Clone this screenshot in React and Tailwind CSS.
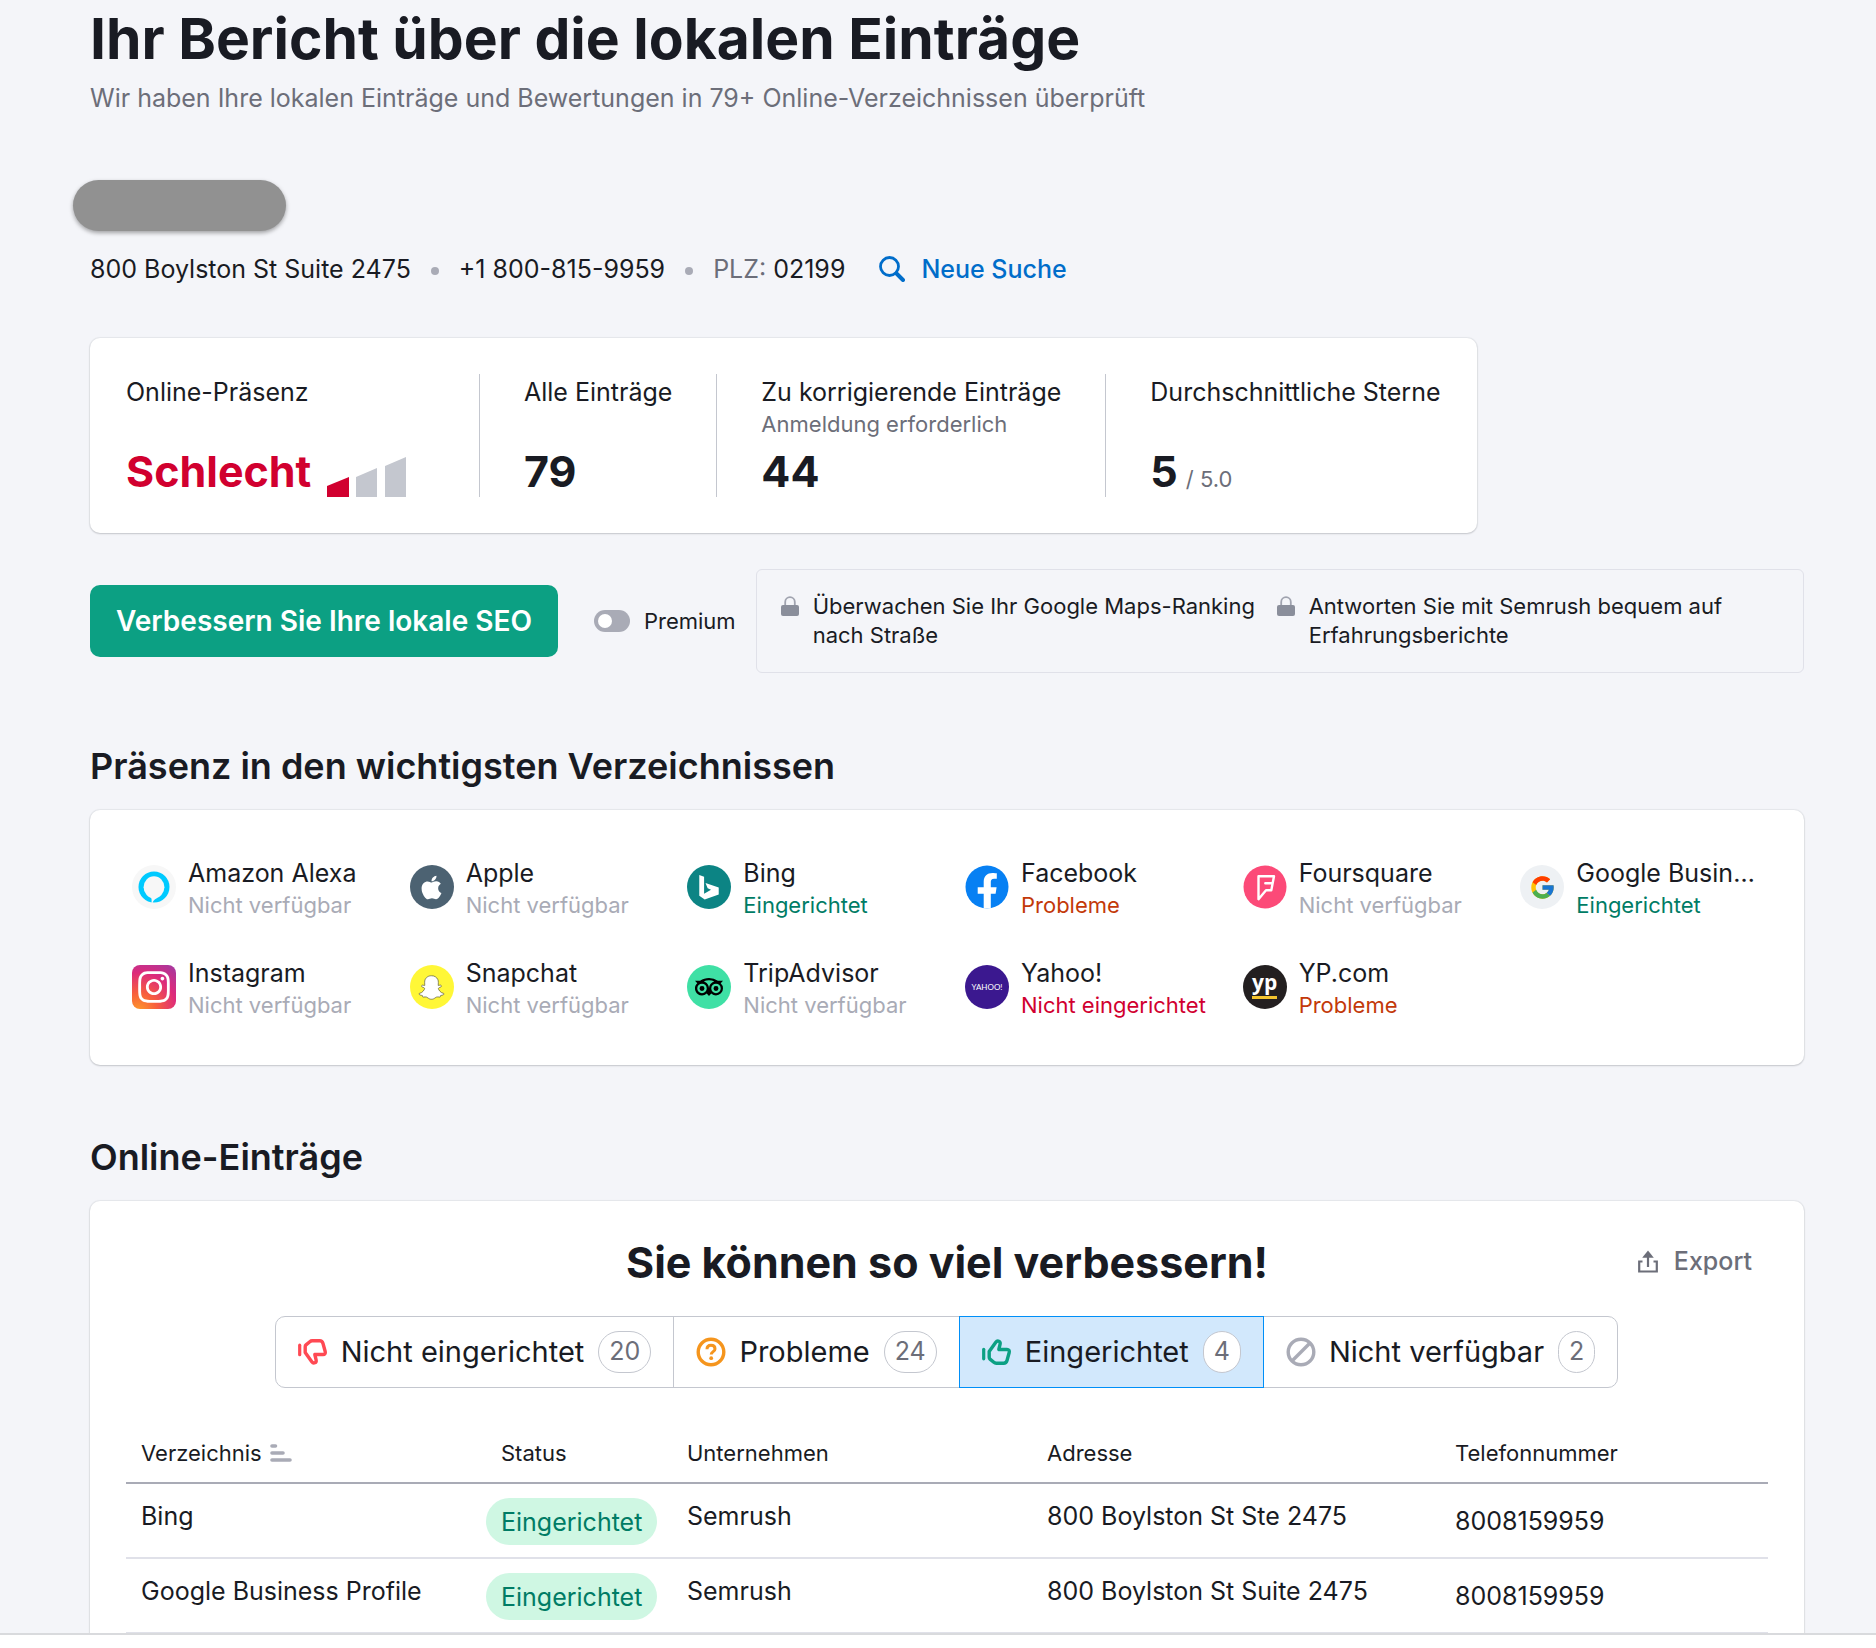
import React from "react";
import { FaApple, FaInstagram, FaSnapchatGhost } from "react-icons/fa";
import { FcGoogle } from "react-icons/fc";
import { SiTripadvisor } from "react-icons/si";

const disc = "size-11 shrink-0 rounded-full flex items-center justify-center overflow-hidden";

function AlexaLogo() {
  return (
    <svg viewBox="0 0 44 44" className="size-11 shrink-0" aria-hidden="true">
      <circle cx="22" cy="22" r="22" fill="#f7f7f7" />
      <circle cx="22" cy="22" r="15.5" fill="#00caff" />
      <ellipse cx="22" cy="22.3" rx="10.4" ry="11" fill="#f7f7f7" />
      <path d="M16.500 31c2 .9 3 2 3.100 3.500v3.300l1 .2c.3-1.800 1.500-3.200 4.200-4.700l3-3.500z" fill="#f7f7f7" />
    </svg>
  );
}

function AppleLogo() {
  return (
    <span className={`${disc} bg-[#4c6272]`}>
      <FaApple className="size-[27px] text-white" aria-hidden="true" />
    </span>
  );
}

function BingLogo() {
  return (
    <svg viewBox="0 0 43 43" className="size-11 shrink-0" aria-hidden="true">
      <circle cx="21.500" cy="21.500" r="21.500" fill="#0c8484" />
      <path d="M12 9.800l4.700 1.700v16.500l6.800-3.900-3.300-1.500-2.100-5.100 12.900 4.600v6.700L17.300 33.800 12 30z" fill="#fff" />
    </svg>
  );
}

function FacebookLogo() {
  return (
    <svg viewBox="0 0 43 44" className="size-11 shrink-0" aria-hidden="true">
      <circle cx="21.500" cy="22" r="21.500" fill="#0780f3" />
      <path
        d="M18.200 43.600V28.800h-6v-6.600h6v-5.400c0-6 3.600-8.900 8.800-8.900 1.800 0 3.600.3 4.300.4v5.500h-2.700c-2.600 0-3.300 1.400-3.300 3.200v5.200h5.800l-1 6.600h-4.800v14.800z"
        fill="#fff"
      />
    </svg>
  );
}

function FoursquareLogo() {
  return (
    <svg viewBox="0 0 43 44" className="size-11 shrink-0" aria-hidden="true">
      <circle cx="21.500" cy="22" r="21.500" fill="#fc4a78" />
      <path
        d="M15 11.200h15.500l-2.700 14H22.500l-7.500 9zM21.800 18.200h7"
        fill="none"
        stroke="#fff"
        strokeWidth="2.400"
        strokeLinejoin="round"
        strokeLinecap="round"
      />
    </svg>
  );
}

function GoogleLogo() {
  return (
    <span className={`${disc} bg-[#eef1f4]`}>
      <FcGoogle className="size-[27px]" aria-hidden="true" />
    </span>
  );
}

function InstagramLogo() {
  return (
    <span className="size-11 shrink-0 flex items-center justify-center rounded-lg bg-[radial-gradient(circle_at_15%_105%,#fd9a2b_0%,#f8603c_30%,#dd2a7b_65%,#8d3fb0_110%)]">
      <FaInstagram className="size-[36px] text-white" aria-hidden="true" />
    </span>
  );
}

function SnapchatLogo() {
  return (
    <span className={`${disc} bg-[#fff737]`}>
      <FaSnapchatGhost className="size-[25px] overflow-visible text-white" stroke="#55553a" strokeWidth="14" aria-hidden="true" />
    </span>
  );
}

function TripadvisorLogo() {
  return (
    <span className={`${disc} bg-[#3fe0a5]`}>
      <SiTripadvisor className="size-7 text-black" aria-hidden="true" />
    </span>
  );
}

function YahooLogo() {
  return (
    <span className={`${disc} bg-[#3b188f] font-['Lato',sans-serif] text-[8px] text-white`} aria-hidden="true">
      YAHOO!
    </span>
  );
}

function YpLogo() {
  return (
    <span className={`${disc} bg-[#231f20]`} aria-hidden="true">
      <span className="mb-1 border-b-[3px] border-[#f3c32e] pb-1 font-['Open_Sans',sans-serif] text-[21px] leading-5 font-bold text-white">
        yp
      </span>
    </span>
  );
}

function SearchIcon() {
  return (
    <svg viewBox="0 0 26 26" className="size-[26px]" fill="none" stroke="currentColor" aria-hidden="true">
      <circle cx="10.500" cy="10.500" r="9" strokeWidth="2.800" />
      <path d="M17.500 17.500l6.500 6.500" strokeWidth="4" strokeLinecap="round" />
    </svg>
  );
}

function LockIcon() {
  return (
    <svg viewBox="0 0 18 20" className="mt-1 h-5 w-[18px] shrink-0" aria-hidden="true">
      <rect x="0" y="9" width="18" height="11" rx="2" fill="#8a8e9b" />
      <path d="M4.200 9V6a4.800 4.800 0 0 1 9.600 0v3" fill="none" stroke="#a0a3af" strokeWidth="1.800" />
    </svg>
  );
}

function ExportIcon() {
  return (
    <svg viewBox="0 0 20 23" className="h-[23px] w-5" fill="none" stroke="currentColor" strokeWidth="2.200" aria-hidden="true">
      <path d="M4.500 11.500H1.200v10h17.600v-10h-3.300M10 17V6" />
      <path d="M10 .5l5.800 7.200H4.200z" fill="currentColor" stroke="none" />
    </svg>
  );
}

function ThumbIcon({ down }) {
  return (
    <svg viewBox="0 0 30 30" className="size-[30px] shrink-0" fill="none" stroke="currentColor" aria-hidden="true">
      <g transform={down ? "matrix(1 0 0 -1 0 30)" : undefined}>
        <path d="M1.700 12.300v9.500" strokeWidth="3.200" strokeLinecap="round" />
        <path
          d="M7.200 14.500l6.600-9.300c1.700-2.300 5-1 4.300 2l-1.300 5.300h8.200c1.800 0 2.700 1.200 2.200 3l-2.200 8c-.5 1.700-1.600 2.700-3.300 2.700h-7.500c-1 0-1.700-.3-2.400-.9L8 22.100c-.6-.5-.8-1-.8-1.800z"
          strokeWidth="3.400"
          strokeLinejoin="round"
        />
      </g>
    </svg>
  );
}

function QuestionIcon() {
  return (
    <svg viewBox="0 0 30 30" className="size-[30px] shrink-0" fill="none" stroke="currentColor" aria-hidden="true">
      <circle cx="15" cy="15" r="12.800" strokeWidth="3.400" />
      <path d="M11 12.300c0-2.500 1.700-4 4-4s4 1.400 4 3.600c0 2.800-3.800 2.700-3.800 5.600" strokeWidth="3" />
      <circle cx="15.200" cy="21.200" r="1.900" fill="currentColor" stroke="none" />
    </svg>
  );
}

function BanIcon() {
  return (
    <svg viewBox="0 0 30 30" className="size-[30px] shrink-0" fill="none" stroke="currentColor" strokeWidth="3.400" aria-hidden="true">
      <circle cx="15" cy="15" r="12.800" />
      <path d="M6 24L24 6" />
    </svg>
  );
}

function SortIcon() {
  return (
    <svg viewBox="0 0 22 18" className="h-[18px] w-[22px]" stroke="#a9abb6" strokeWidth="3.600" strokeLinecap="round" aria-hidden="true">
      <path d="M2 2h3.500M2 9h11M2 16h18" />
    </svg>
  );
}

const card = "rounded-[10px] bg-white shadow-[0_0_1px_1px_rgba(25,27,35,0.06),0_1px_2px_0_rgba(25,27,35,0.16)]";

const tones = {
  none: "text-[#a9abb6]",
  ok: "text-[#007c65]",
  warn: "text-[#c33909]",
  bad: "text-[#d1002f]",
};

const directories = [
  { name: "Amazon Alexa", status: "Nicht verfügbar", tone: "none", Logo: AlexaLogo },
  { name: "Apple", status: "Nicht verfügbar", tone: "none", Logo: AppleLogo },
  { name: "Bing", status: "Eingerichtet", tone: "ok", Logo: BingLogo },
  { name: "Facebook", status: "Probleme", tone: "warn", Logo: FacebookLogo },
  { name: "Foursquare", status: "Nicht verfügbar", tone: "none", Logo: FoursquareLogo },
  { name: "Google Business Profile", status: "Eingerichtet", tone: "ok", Logo: GoogleLogo },
  { name: "Instagram", status: "Nicht verfügbar", tone: "none", Logo: InstagramLogo },
  { name: "Snapchat", status: "Nicht verfügbar", tone: "none", Logo: SnapchatLogo },
  { name: "TripAdvisor", status: "Nicht verfügbar", tone: "none", Logo: TripadvisorLogo },
  { name: "Yahoo!", status: "Nicht eingerichtet", tone: "bad", Logo: YahooLogo },
  { name: "YP.com", status: "Probleme", tone: "warn", Logo: YpLogo },
];

const filters = [
  { label: "Nicht eingerichtet", count: 20, icon: <ThumbIcon down />, color: "text-[#ff4953]" },
  { label: "Probleme", count: 24, icon: <QuestionIcon />, color: "text-[#f5951d]" },
  { label: "Eingerichtet", count: 4, icon: <ThumbIcon />, color: "text-[#0ca083]", active: true },
  { label: "Nicht verfügbar", count: 2, icon: <BanIcon />, color: "text-[#a9abb6]" },
];

const rows = [
  { directory: "Bing", company: "Semrush", address: "800 Boylston St Ste 2475", phone: "8008159959" },
  { directory: "Google Business Profile", company: "Semrush", address: "800 Boylston St Suite 2475", phone: "8008159959" },
];

function Metric({ label, note, className, children }) {
  return (
    <div className={`flex flex-col justify-between ${className}`}>
      <div>
        <p className="text-[25px] leading-9">{label}</p>
        {note && <p className="text-[22px] leading-7 text-[#6c6e79]">{note}</p>}
      </div>
      <div className="text-[43px] leading-[52px] font-bold">{children}</div>
    </div>
  );
}

function Dot() {
  return <span className="mx-5 mt-1 size-2 rounded-full bg-[#a9abb6]" />;
}

export default function App() {
  return (
    <div className="flex h-screen flex-col bg-[#f4f5f9] font-['Inter',sans-serif] text-[#191b23]">
      <main className="min-h-0 flex-1 overflow-hidden pt-[3px] pr-[72px] pl-[90px]">
        <header>
          <h1 className="text-[57px] leading-[72px] font-bold">Ihr Bericht über die lokalen Einträge</h1>
          <p className="mt-[5px] text-[25px] leading-9 text-[#6c6e79]">
            Wir haben Ihre lokalen Einträge und Bewertungen in 79+ Online-Verzeichnissen überprüft
          </p>
        </header>

        <div className="mt-16 -ml-[17px] h-[51px] w-[213px] rounded-[26px] bg-[#919191] shadow-[0_2px_4px_rgba(0,0,0,0.35)]" />

        <div className="mt-5 flex items-center text-[25px] leading-9">
          <span>800 Boylston St Suite 2475</span>
          <Dot />
          <span>+1 800-815-9959</span>
          <Dot />
          <span>
            <span className="text-[#6c6e79]">PLZ:</span> 02199
          </span>
          <a href="#suche" className="ml-[34px] flex items-center gap-4 font-medium text-[#006dca]">
            <SearchIcon />
            Neue Suche
          </a>
        </div>

        <section className={`mt-[51px] flex w-fit p-9 ${card}`}>
          <Metric label="Online-Präsenz" className="h-[123px] w-[353px]">
            <span className="flex items-end gap-4 text-[#d1002f]">
              Schlecht
              <svg viewBox="0 0 79 40" className="h-10 w-[79px]" aria-hidden="true">
                <path d="M0 29l22-9v20H0z" fill="#d1002f" />
                <path d="M29 20l21-9v29H29zM58 9l21-9v40H58z" fill="#c4c7cf" />
              </svg>
            </span>
          </Metric>
          <Metric label="Alle Einträge" className="border-l border-[#c4c7cf] px-11">79</Metric>
          <Metric label="Zu korrigierende Einträge" note="Anmeldung erforderlich" className="border-l border-[#c4c7cf] px-11">
            44
          </Metric>
          <Metric label="Durchschnittliche Sterne" className="border-l border-[#c4c7cf] pl-11">
            5<span className="ml-2 text-[22px] leading-none font-normal text-[#6c6e79]">/ 5.0</span>
          </Metric>
        </section>

        <section className="mt-9 flex items-center">
          <button type="button" className="h-[72px] shrink-0 rounded-[10px] bg-[#0ca083] px-[26px] text-[28px] font-semibold text-white">
            Verbessern Sie Ihre lokale SEO
          </button>
          <label className="ml-9 flex shrink-0 items-center gap-3.5 text-[22px] leading-7">
            <input
              type="checkbox"
              role="switch"
              className="flex h-[22px] w-9 appearance-none items-center rounded-full bg-[#a9abb6] px-1 before:size-3.5 before:rounded-full before:bg-white before:content-['']"
            />
            Premium
          </label>
          <div className="ml-5 flex flex-1 gap-5 rounded-md border border-[#e0e1e9] px-6 py-[22px] text-[22px] leading-[29px]">
            <p className="flex w-[476px] shrink-0 gap-3.5">
              <LockIcon />
              <span>Überwachen Sie Ihr Google Maps-Ranking nach Straße</span>
            </p>
            <p className="flex flex-1 gap-3.5">
              <LockIcon />
              <span>Antworten Sie mit Semrush bequem auf Erfahrungsberichte</span>
            </p>
          </div>
        </section>

        <h2 className="mt-[71px] text-[36px] leading-[44px] font-semibold">Präsenz in den wichtigsten Verzeichnissen</h2>
        <section className={`mt-[22px] grid grid-cols-6 gap-y-9 pt-[47px] pr-1.5 pb-11 pl-[42px] ${card}`}>
          {directories.map(({ name, status, tone, Logo }) => (
            <div key={name} className="flex min-w-0 gap-3 pr-10">
              <span className="mt-2 shrink-0">
                <Logo />
              </span>
              <div className="min-w-0 leading-8">
                <p className="truncate text-[25px] leading-8">{name}</p>
                <p className={`text-[22px] leading-8 whitespace-nowrap ${tones[tone]}`}>{status}</p>
              </div>
            </div>
          ))}
        </section>

        <h2 className="mt-[70px] text-[36px] leading-[44px] font-semibold">Online-Einträge</h2>
        <section className={`mt-[22px] px-9 pt-[35px] pb-9 ${card}`}>
          <div className="grid grid-cols-[1fr_auto_1fr]">
            <h3 className="col-start-2 text-[43px] leading-[52px] font-bold">Sie können so viel verbessern!</h3>
            <button type="button" className="mt-[7px] mr-4 flex h-9 items-center gap-4 justify-self-end text-[25px] leading-9 font-medium text-[#6c6e79]">
              <ExportIcon />
              Export
            </button>
          </div>

          <div className="mt-7 flex justify-center">
            {filters.map(({ label, count, icon, color, active }) => (
              <button
                key={label}
                type="button"
                aria-pressed={!!active}
                className={`-ml-px flex h-[72px] items-center border px-[22px] text-[29px] first:rounded-l-[10px] last:rounded-r-[10px] ${
                  active ? "z-10 border-[#008ff8] bg-[#d2e8fc]" : "border-[#c4c7cf] bg-white"
                }`}
              >
                <span className={color}>{icon}</span>
                <span className="ml-[13px]">{label}</span>
                <span className="ml-3.5 flex h-[42px] items-center rounded-[21px] border border-[#c4c7cf] bg-white px-2.5 text-[25px] text-[#6c6e79]">
                  {count}
                </span>
              </button>
            ))}
          </div>

          <table className="mt-9 w-full table-fixed border-separate border-spacing-0 text-left">
            <colgroup>
              <col className="w-[360px]" />
              <col className="w-[186px]" />
              <col className="w-[360px]" />
              <col className="w-[408px]" />
              <col />
            </colgroup>
            <thead className="text-[22px] leading-8">
              <tr className="*:border-b-2 *:border-[#a9abb6] *:px-[15px] *:py-[13px] *:font-normal">
                <th scope="col">
                  <span className="flex items-center gap-2">
                    Verzeichnis
                    <SortIcon />
                  </span>
                </th>
                <th scope="col">Status</th>
                <th scope="col">Unternehmen</th>
                <th scope="col">Adresse</th>
                <th scope="col">Telefonnummer</th>
              </tr>
            </thead>
            <tbody className="text-[25px] leading-9">
              {rows.map((row) => (
                <tr key={row.directory} className="*:border-b-2 *:border-[#e0e1e9]">
                  <td className="px-[15px] pt-3.5 align-top">{row.directory}</td>
                  <td className="pt-3.5 pb-3">
                    <span className="flex h-[47px] w-fit items-center rounded-full bg-[#cff7e3] px-[15px] text-[#007c65]">Eingerichtet</span>
                  </td>
                  <td className="px-[15px] pt-3.5 align-top">{row.company}</td>
                  <td className="px-[15px] pt-3.5 align-top">{row.address}</td>
                  <td className="px-[15px] align-middle">{row.phone}</td>
                </tr>
              ))}
            </tbody>
          </table>
        </section>
      </main>
      <footer className="h-[15px] shrink-0 border-t-2 border-[#d9dadd] bg-white" />
    </div>
  );
}
